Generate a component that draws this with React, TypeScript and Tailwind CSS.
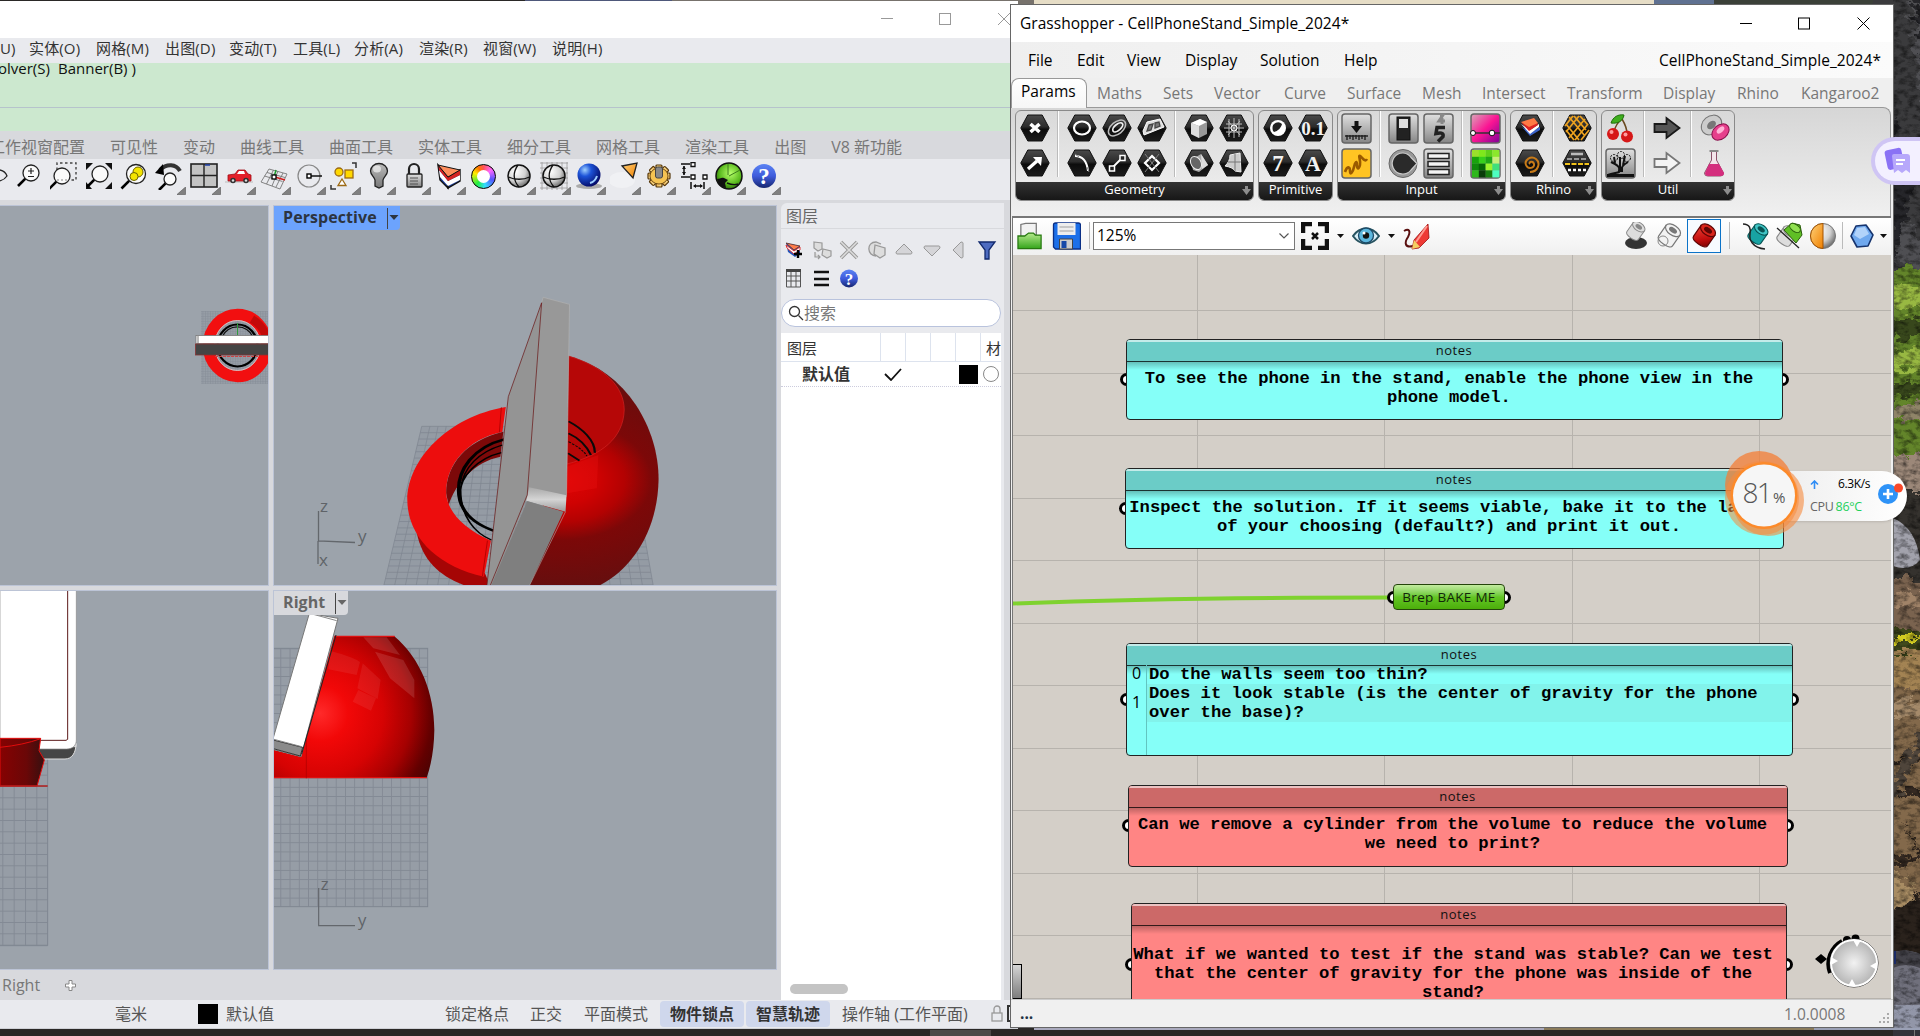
import type { ReactNode } from "react";

const sans = "font-['Open_Sans','Noto_Sans_CJK_SC',sans-serif]";

/* ---------- shared gradients ---------- */
function Defs() {
  return (
    <svg width="0" height="0" className="absolute">
      <defs>
        <linearGradient id="hex" x1="0" y1="0" x2="0" y2="1">
          <stop offset="0" stopColor="#4a4a4a" />
          <stop offset=".45" stopColor="#2b2b2b" />
          <stop offset=".55" stopColor="#0c0c0c" />
          <stop offset="1" stopColor="#1c1c1c" />
        </linearGradient>
        <linearGradient id="metal" x1="0" y1="0" x2="0" y2="1">
          <stop offset="0" stopColor="#e0e0e0" />
          <stop offset=".5" stopColor="#b4b4b4" />
          <stop offset="1" stopColor="#858585" />
        </linearGradient>
        <radialGradient id="greyBall" cx=".35" cy=".3" r=".8">
          <stop offset="0" stopColor="#fff" />
          <stop offset=".55" stopColor="#d2d2d2" />
          <stop offset="1" stopColor="#555" />
        </radialGradient>
        <radialGradient id="blueBall" cx=".32" cy=".28" r=".8">
          <stop offset="0" stopColor="#9fd0ff" />
          <stop offset=".35" stopColor="#1c53d8" />
          <stop offset="1" stopColor="#02045e" />
        </radialGradient>
        <radialGradient id="greenBall" cx=".55" cy=".4" r=".7">
          <stop offset="0" stopColor="#b6ff6a" />
          <stop offset=".6" stopColor="#58b81c" />
          <stop offset="1" stopColor="#1a4a05" />
        </radialGradient>
        <linearGradient id="helpBlue" x1="0" y1="0" x2="0" y2="1">
          <stop offset="0" stopColor="#5b83f3" />
          <stop offset=".5" stopColor="#3f5cdc" />
          <stop offset="1" stopColor="#16266f" />
        </linearGradient>
        <linearGradient id="orange" x1="0" y1="0" x2="1" y2="1">
          <stop offset="0" stopColor="#ffd27a" />
          <stop offset="1" stopColor="#f08000" />
        </linearGradient>
        <linearGradient id="gold" x1="0" y1="0" x2="1" y2="1">
          <stop offset="0" stopColor="#ffe9a0" />
          <stop offset="1" stopColor="#d88a1e" />
        </linearGradient>
        <linearGradient id="redTube" x1="0" y1="0" x2="1" y2="1">
          <stop offset="0" stopColor="#ef4034" />
          <stop offset=".6" stopColor="#c00d0d" />
          <stop offset="1" stopColor="#6e0202" />
        </linearGradient>
        <linearGradient id="greenFolder" x1="0" y1="0" x2="0" y2="1">
          <stop offset="0" stopColor="#b5ea8c" />
          <stop offset="1" stopColor="#35a51c" />
        </linearGradient>
        <linearGradient id="pink" x1="0" y1="0" x2="1" y2="1">
          <stop offset="0" stopColor="#d9a9b9" />
          <stop offset=".5" stopColor="#fb1593" />
          <stop offset="1" stopColor="#7c0099" />
        </linearGradient>
        <linearGradient id="shade" x1="0" y1="0" x2="0" y2="1">
          <stop offset="0" stopColor="#bbb" />
          <stop offset="1" stopColor="#777" />
        </linearGradient>
        <radialGradient id="rightBall" gradientUnits="userSpaceOnUse" cx="960" cy="400" r="420">
          <stop offset="0" stopColor="#ff2a2a" />
          <stop offset=".2" stopColor="#f20808" />
          <stop offset=".45" stopColor="#d60303" />
          <stop offset=".65" stopColor="#a50101" />
          <stop offset=".8" stopColor="#620000" />
          <stop offset="1" stopColor="#2d0606" />
        </radialGradient>
        <radialGradient id="perspBall" gradientUnits="userSpaceOnUse" cx="1130" cy="840" r="360">
          <stop offset="0" stopColor="#e00505" />
          <stop offset=".2" stopColor="#cf0202" />
          <stop offset=".35" stopColor="#b30202" />
          <stop offset=".5" stopColor="#7c0808" />
          <stop offset="1" stopColor="#601010" />
        </radialGradient>
        <linearGradient id="bowl" x1="0" y1="0" x2="1" y2="0">
          <stop offset="0" stopColor="#860202" />
          <stop offset=".6" stopColor="#6a0707" />
          <stop offset="1" stopColor="#351010" />
        </linearGradient>
        <linearGradient id="edgeShine" x1="0" y1="0" x2="0" y2="1">
          <stop offset="0" stopColor="#a8a8a8" />
          <stop offset=".5" stopColor="#d4d4d4" />
          <stop offset="1" stopColor="#9b9b9b" />
        </linearGradient>
        <pattern id="gridRight" x="841" y="205" width="27.7" height="27.7" patternUnits="userSpaceOnUse">
          <path d="M0 0H27.7M0 0V27.7" stroke="#7f8691" strokeWidth="5.5" fill="none" />
        </pattern>
        <pattern id="gridFront" x="7" y="618" width="34" height="34" patternUnits="userSpaceOnUse">
          <path d="M0 0H34M0 0V34" stroke="#7f8691" strokeWidth="6" fill="none" />
        </pattern>
        <pattern id="gridTop" width="2.5" height="2.5" patternUnits="userSpaceOnUse">
          <path d="M0 0H3M0 0V3" stroke="#7f8691" strokeWidth="1" fill="none" />
        </pattern>
      </defs>
    </svg>
  );
}

/* ---------- Rhino toolbar icons, 28 x 28 ---------- */
const I = ({ children, w = 28, h = 28, box = "0 0 28 28" }: { children: ReactNode; w?: number; h?: number; box?: string }) => (
  <svg width={w} height={h} viewBox={box} fill="none" className="shrink-0">
    {children}
  </svg>
);

const Lens = ({ x, y, r, children }: { x: number; y: number; r: number; children?: ReactNode }) => (
  <>
    <path d={`M${x - r * 0.7} ${y + r * 0.7}L${x - r - 5} ${y + r + 5}`} stroke="#000" strokeWidth="2.6" />
    <circle cx={x} cy={y} r={r} fill="#fafafa" stroke="#222" strokeWidth="1.3" />
    {children}
  </>
);

const gearTeeth = [0, 45, 90, 135, 180, 225, 270, 315];

const rhinoIcons: ReactNode[] = [
  <I><Lens x={16} y={11} r={8}><path d="M16 6v6M13 9h6M13 14.5h6" stroke="#222" strokeWidth="1.2" /></Lens></I>,
  <I><path d="M7 8V1h19v17h-6" stroke="#444" strokeWidth="1.4" strokeDasharray="2.5 2.5" /><Lens x={12} y={14} r={8}><path d="M7 18h11" stroke="#888" strokeDasharray="2 2" /></Lens></I>,
  <I><path d="M1 1h7l-7 7zM27 1h-7l7 7zM27 27h-7l7-7zM1 27h6l-6-7z" fill="#111" /><Lens x={15} y={12} r={8} /></I>,
  <I><Lens x={16} y={12} r={9.5}><circle cx="18" cy="10" r="5" fill="#f4e400" stroke="#6d6500" /><circle cx="14" cy="14.5" r="4" fill="#f4e400" stroke="#6d6500" /></Lens></I>,
  <I><path d="M5 8C12 1 21 2 25 9" stroke="#333" strokeWidth="4" /><path d="M8 2L9 13 0 11z" fill="#000" /><Lens x={15} y={17} r={6} /></I>,
  <I><rect x="1" y="2" width="26" height="23" fill="#c3c3c3" stroke="#222" strokeWidth="1.6" /><path d="M14 2v23M1 13.5h26" stroke="#222" strokeWidth="1.4" /><path d="M15 3h5" stroke="#1c3fa8" strokeWidth="1.5" /></I>,
  <I><path d="M0 20h28" stroke="#bbb" /><path d="M3 13l7-1 3-4h7l3 4 3 1v6H3z" fill="#e3202a" stroke="#9e0d14" strokeWidth=".8" /><path d="M12 12l2-3h5l1 3z" fill="#fff" /><circle cx="8" cy="18.5" r="2.8" fill="#333" /><circle cx="8" cy="18.5" r="1.2" fill="#ddd" /><circle cx="21" cy="18.5" r="2.8" fill="#333" /><circle cx="21" cy="18.5" r="1.2" fill="#ddd" /></I>,
  <I><path d="M9 7l18 5-7 15-19-7zM7 10.5l18 5M4.5 14l18 5.5M13.5 8l-7 14M18 9l-6 15M23 11l-7 14" stroke="#777" strokeWidth=".9" /><path d="M14 15l2-7" stroke="#1c9a2b" strokeWidth="1.5" /><path d="M15 15l10 3" stroke="#d01e1e" strokeWidth="1.8" /><rect x="12" y="13" width="4" height="4" fill="#fff" stroke="#000" strokeWidth="1.3" /></I>,
  <I><circle cx="14" cy="14" r="11" stroke="#888" strokeWidth="1.2" /><rect x="12" y="12" width="4" height="4" stroke="#000" strokeWidth="1.4" fill="#fff" /><path d="M16 14h11" stroke="#000" strokeWidth="1.4" /></I>,
  <I><circle cx="9" cy="10" r="4" fill="#ffd800" stroke="#9c6a14" strokeWidth="1.3" /><rect x="15" y="8" width="8" height="8" fill="#ffd800" stroke="#9c6a14" strokeWidth="1.3" /><path d="M12 17l4 6.5H8z" fill="#fff" stroke="#9c6a14" strokeWidth="1.3" /><path d="M22 1h4v5M1 23v4h5" stroke="#333" strokeWidth="1.5" /></I>,
  <I><path d="M10 18C9.5 15 5.5 13 5.5 9a8.5 7.5 0 0117 0c0 4-4 6-4.500 9v6L14 26l-4-2z" fill="url(#shade)" stroke="#222" strokeWidth="1.3" /><ellipse cx="12" cy="7" rx="4" ry="3.5" fill="#fff" opacity=".6" /></I>,
  <I><path d="M9 12V7a5 5 0 0110 0v5" stroke="#222" strokeWidth="2.2" /><rect x="7" y="12" width="15" height="13" rx="1" fill="url(#metal)" stroke="#222" strokeWidth="1.3" /><path d="M10 16h8M10 19h8M10 22h8" stroke="#555" /></I>,
  <I><path d="M3 3l10 12v11L5 18z" fill="#1b3fa0" stroke="#111" strokeWidth="1.4" /><path d="M13 15l12-7v11l-12 7z" fill="#1b3fa0" stroke="#111" strokeWidth="1.4" /><path d="M4 8l9 11 12-6v5l-12 6-8-9z" fill="#fff" /><path d="M3.5 4L13 15.500 25 8v5l-12 6L4 8z" fill="#d62222" /><path d="M3 3l22 5-12 7z" fill="#ff8d5c" stroke="#111" /></I>,
  <div className="grid h-[25px] w-[25px] place-items-center rounded-full border border-black bg-[conic-gradient(#f55_0deg,#f6f_50deg,#55f_110deg,#3df_170deg,#2e4_220deg,#fe0_290deg,#f70_330deg,#f55_360deg)]"><div className="h-[13px] w-[13px] rounded-full bg-white" /></div>,
  <I><circle cx="14" cy="14" r="11" fill="url(#greyBall)" stroke="#111" strokeWidth="1.5" /><path d="M3.5 15c6 3 15 3 21 0M13 3c-5 7-5 15 1 22" stroke="#111" strokeWidth="1.3" /></I>,
  <I><path d="M0 1h28M0 6h28M0 11h28M0 16h28M0 21h28M0 26h28M2 0v28M7 0v28M12 0v28M17 0v28M22 0v28M27 0v28" stroke="#999" strokeWidth=".8" /><circle cx="14" cy="14" r="11" fill="url(#greyBall)" stroke="#111" strokeWidth="1.5" /><path d="M3.5 15c6 3 15 3 21 0M13 3c-5 7-5 15 1 22" stroke="#111" strokeWidth="1.3" /></I>,
  <I><ellipse cx="14" cy="24" rx="13" ry="3" fill="#aaa" /><circle cx="14" cy="13" r="11.5" fill="url(#blueBall)" /><path d="M15 21c4-1 6-4 7-7" stroke="#9fd0ff" strokeWidth="2" /></I>,
  <I><ellipse cx="12" cy="18" rx="13" ry="8" fill="#fff" opacity=".35" /><path d="M12 4l15-3-4 15z" fill="url(#orange)" stroke="#222" strokeWidth="1.3" /></I>,
  <I>
    {gearTeeth.map((a) => <rect key={a} x="11" y="2" width="6" height="8" rx="1" fill="url(#gold)" stroke="#533407" strokeWidth="1.2" transform={`translate(0 1) rotate(${a} 14 13) translate(0 0)`} />)}
    <ellipse cx="14" cy="14" rx="9" ry="8" fill="#f5c352" stroke="#533407" strokeWidth=".8" />
    <rect x="10.5" y="5" width="7" height="11" rx="2" fill="#888" stroke="#444" />
  </I>,
  <I><path d="M1 2h9M1 15h9M4 4v9M11 20v7M24 20v7M14 24h8" stroke="#111" strokeWidth="1.5" /><path d="M2 7l2-3 2 3zM2 10l2 3 2-3zM16 22l-3 2 3 2zM20 22l3 2-3 2z" fill="#111" /><path d="M11 .5h4v4h-4zM11 13h4v4h-4zM23 13h4v4h-4z" fill="#fff" stroke="#111" strokeWidth="1.3" /></I>,
  <I><circle cx="14" cy="14" r="13" fill="url(#greenBall)" stroke="#111" strokeWidth="1.5" /><path d="M2 17c3 0 4-2 7-1l4 2-3 3 1 5c-5 0-8-4-9-9z" fill="#111" /><path d="M12 21c5 2 8 2 11 1" stroke="#111" strokeWidth="1.4" /><path d="M13 2v11M14 14l11-6" stroke="#3d7d1c" /></I>,
  <I><circle cx="14" cy="14" r="12" fill="url(#helpBlue)" /><text x="14" y="22" textAnchor="middle" fontSize="23" fontWeight="700" fill="#fff" className="font-['Liberation_Serif']">?</text></I>,
];

function RhinoToolbar() {
  return (
    <div className="flex h-[41px] shrink-0 items-start overflow-hidden bg-[#e9eaee] pt-[3px]">
      <svg width="11" height="28" viewBox="0 0 11 28" fill="none" className="shrink-0">
        <path d="M0 8c4 1 6 3 7 6-2 3-4 4-7 5" stroke="#222" strokeWidth="1.3" />
      </svg>
      {rhinoIcons.map((icon, i) => (
        <div key={i} className="relative flex h-[33px] w-[35px] shrink-0 justify-center">
          <div className="flex h-[28px] items-center">{icon}</div>
          {i > 3 && (
            <svg width="9" height="8" viewBox="0 0 9 8" className="absolute right-0 bottom-0">
              <path d="M8.5 0v7.5H0z" fill="#808080" stroke="#555" strokeWidth=".6" />
            </svg>
          )}
        </div>
      ))}
    </div>
  );
}

/* ---------- viewport scenes ---------- */
function TopScene() {
  return (
    <svg width="268" height="379" viewBox="0 0 268 379" fill="none" className="block">
      <rect x="201" y="105" width="68" height="73" fill="#969da6" />
      <rect x="201" y="105" width="68" height="73" fill="url(#gridTop)" opacity=".7" />
      <ellipse cx="237.5" cy="139.5" rx="29" ry="31" stroke="#f20f10" strokeWidth="11.5" />
      <path d="M252 113c8 5 13 12 15 20" stroke="#8a0505" strokeWidth="8" opacity=".45" />
      <ellipse cx="237.5" cy="139.5" rx="23" ry="25" stroke="#e8c9c9" strokeWidth=".8" />
      <ellipse cx="237.5" cy="139.5" rx="20" ry="21" stroke="#000" strokeWidth="2.2" />
      <path d="M222 131a17.500 19 0 0131 0" stroke="#111" strokeWidth="1.3" />
      <path d="M237.5 117v12" stroke="#2f9a3d" />
      <path d="M215 150.5h44" stroke="#c44" strokeDasharray="3 1" />
      <rect x="196" y="129.5" width="73" height="8" fill="#fff" stroke="#777" strokeWidth=".8" />
      <path d="M198 130v8" stroke="#777" />
      <rect x="195.5" y="138" width="73" height="11" fill="#444" stroke="#833" strokeWidth=".8" />
    </svg>
  );
}

function PerspectiveScene() {
  const steps = Array.from({ length: 26 }, (_, i) => i / 25);
  return (
    <svg width="502" height="379" viewBox="0 0 502 379" fill="none" className="block">
      <g transform="scale(.4975 .33333) translate(-551 -18)">
        <path d="M848 679H1257L1313 1155H772z" fill="#949ba4" />
        {steps.map((t) => (
          <path key={t} d={`M${848 + 409 * t} 679L${772 + 541 * t} 1155M${848 - 76 * t} ${679 + 476 * t}H${1257 + 56 * t}`} stroke="#7f8691" strokeWidth="1.8" />
        ))}
        <path d="M838 1000C850 1080 880 1125 932 1155H985L975 1120z" fill="#a50505" />
        <path d="M1143 468C1262 515 1325 690 1324 840C1322 990 1272 1105 1207 1155H1064z" fill="url(#perspBall)" />
        <path d="M1143 468C1215 500 1255 560 1255 630C1253 715 1210 765 1140 792z" fill="#b60707" stroke="#d62626" strokeWidth="1.5" />
        <path d="M1140 800L1175 780 1203 765 1200 865 1140 880z" fill="#f01515" opacity=".3" />
        <path d="M1143 664C1170 685 1196 720 1196 758M1143 700C1165 715 1180 740 1188 765M1142 760L1165 782" stroke="#0a0a0a" strokeWidth="4.5" />
        <path d="M1143 725C1160 738 1172 750 1180 768" stroke="#0a0a0a" strokeWidth="2.5" strokeDasharray="6 3" />
        <path d="M1012 695C940 720 897 790 897 880L902 916C915 850 955 785 1006 770z" fill="#7c0909" />
        <path d="M1014 718C950 742 922 810 922 870C922 930 950 970 994 993" stroke="#000" strokeWidth="7" />
        <path d="M1010 735C965 755 930 800 926 870C926 950 955 1000 988 1020M1008 758C960 775 925 830 925 880" stroke="#000" strokeWidth="3.5" />
        <path d="M1017 621C900 650 819 780 819 900C819 1010 880 1100 973 1130L987 1022C930 985 897 930 897 875C898 790 940 718 1010 695z" fill="#ed0d0d" />
        <path d="M1008 622L1004 697M980 1022L970 1128" stroke="#a00" strokeWidth="2" />
        <path d="M1089 308L1022 590L979 1155H990L1064 880z" fill="#949494" />
        <path d="M1092 292L1145 313L1139 890L1062 865L1089 308z" fill="#989898" />
        <path d="M1064 862L1139 886L1137 935L1058 903z" fill="url(#edgeShine)" />
        <path d="M1060 903L1133 935L1065 1155H988z" fill="#7f7f7f" />
        <path d="M1089 308L1022 590L979 1155M1089 308L1060 885L986 1155" stroke="#6b1c1c" strokeWidth="1.8" />
        <path d="M1092 292L1145 313L1139 886M1092 292L1089 308M1137 935L1065 1155" stroke="#b4b4b4" strokeWidth="1.4" />
      </g>
      <path d="M44.5 305v30l36.5 1.5M44 335v23" stroke="#63676c" strokeWidth="1.3" />
      <g fontSize="17" fill="#5f6368" className={sans}>
        <text x="46" y="306">z</text>
        <text x="84" y="336">y</text>
        <text x="45" y="360">x</text>
      </g>
    </svg>
  );
}

function FrontScene() {
  return (
    <svg width="268" height="378" viewBox="0 33 804 1134" fill="none" className="block">
      <rect x="-4" y="536" width="147" height="561" fill="#969da6" />
      <rect x="-4" y="536" width="147" height="561" fill="url(#gridFront)" opacity=".85" />
      <path d="M143 536V1097H0" stroke="#7f8691" strokeWidth="3" />
      <path d="M0 500H228V490C228 520 215 537 195 537H0z" fill="#454545" stroke="#ddd" strokeWidth="3" />
      <path d="M0 20H229V480C229 496 218 507 200 507H0z" fill="#fff" stroke="#888" strokeWidth="2" />
      <path d="M203 33V478L198 481H0" stroke="#5c1a1a" strokeWidth="3" />
      <path d="M0 475H122L117 512 133 540 111 618H0z" fill="url(#bowl)" stroke="#e30c0c" strokeWidth="3" />
      <path d="M0 502Q70 495 122 476" stroke="#e30c0c" strokeWidth="3" />
      <path d="M0 618H143" stroke="#b01c1c" strokeWidth="4" />
    </svg>
  );
}

function RightScene() {
  return (
    <svg width="502" height="378" viewBox="822 33 1506 1134" fill="none" className="block">
      <rect x="822" y="205" width="461" height="775" fill="#969da6" />
      <rect x="822" y="205" width="461" height="775" fill="url(#gridRight)" opacity=".85" />
      <rect x="810" y="205" width="473" height="775" stroke="#7f8691" strokeWidth="3" />
      <path d="M1003 168H1182C1262 235 1303 340 1303 450C1302 505 1295 550 1280 593H822V510L903 530z" fill="url(#rightBall)" />
      <path d="M990 212C1040 225 1075 240 1080 246L1070 285 985 268zM1088 250L1142 300 1133 357 1072 325zM1075 330L1128 355 1113 392 1058 365z" fill="#fff" opacity=".07" />
      <path d="M1090 172L1160 172 1200 225 1120 205zM1125 215L1210 240 1243 300V355L1170 295z" fill="#fff" opacity=".12" />
      <path d="M1003 169H1184M822 593H1281" stroke="#e01010" strokeWidth="4" />
      <path d="M919 450V595" stroke="#a00" strokeWidth="2" />
      <path d="M928 100L1014 115 903 530 818 508V480z" fill="#fff" stroke="#777" strokeWidth="3" />
      <path d="M820 480L908 502 901 528 820 506z" fill="#8b8b8b" stroke="#333" strokeWidth="3" />
      <path d="M940 103L1010 122M822 478L905 500" stroke="#888" strokeWidth="3" />
      <path d="M1008 165L905 522" stroke="#222" strokeWidth="3" />
      <path d="M956 924V1037H1065" stroke="#63676c" strokeWidth="3.5" />
      <g fontSize="50" fill="#5f6368" className={sans}>
        <text x="962" y="930">z</text>
        <text x="1074" y="1038">y</text>
      </g>
    </svg>
  );
}

function ViewLabel({ name, tone, width }: { name: string; tone: string; width: string }) {
  return (
    <div className={`absolute top-0 left-0 flex h-6 items-center rounded-br pl-[9px] text-[16px] leading-6 font-bold ${tone} ${width}`}>
      <span className="flex-1 pb-[2px] tracking-[.08px]">{name}</span>
      <span className="h-[21px] w-px bg-[#444]" />
      <svg width="12" height="6" viewBox="0 0 12 6"><path d="M1.500 0h9L6 5z" fill="currentColor" /></svg>
    </div>
  );
}

/* ---------- layers panel ---------- */
function LayerTools() {
  return (
    <div className="grid shrink-0 grid-cols-[repeat(8,27.5px)] grid-rows-2 pt-[7px] pl-[3px] *:h-[28px]">
      <I w={24} box="0 0 24 28"><path d="M2 7l14 3v7l-5 4-7-5z" fill="#2554b8" /><path d="M2 9l8 6 6-4v3l-6 4-7-6z" fill="#fff" stroke="#d33" /><path d="M2 7l14 3-6 4z" fill="#ff7c4a" stroke="#533" strokeWidth=".8" /><path d="M14 14v8M10 18h8" stroke="#000" strokeWidth="2.4" /></I>
      <I w={24} box="0 0 24 28"><path d="M2 6l8 1v6l-4 2-4-3zM11 13l8 2v5l-4 2-5-3zM3 16v5h5M6 19l2 2-2 2" fill="#ddd" stroke="#999" strokeWidth="1.2" /></I>
      <I w={24} box="0 0 24 28"><path d="M2 6l16 16M18 6L2 22" stroke="#999" strokeWidth="3.5" /><path d="M2 6l16 16M18 6L2 22" stroke="#ddd" strokeWidth="1.5" /></I>
      <I w={24} box="0 0 24 28"><path d="M8 9l10 3v7l-5 3-6-4zM9 20C0 20-1 6 9 6l5 2" fill="#ddd" stroke="#999" strokeWidth="1.3" /></I>
      <I w={24} box="0 0 24 28"><path d="M10 8l8 8q0 2-1 2H3q-1 0-1-2z" fill="#d5d5d8" stroke="#999" /></I>
      <I w={24} box="0 0 24 28"><path d="M10 20l8-8q0-2-1-2H3q-1 0-1 2z" fill="#d5d5d8" stroke="#999" /></I>
      <I w={24} box="0 0 24 28"><path d="M4 14l8-8q2 0 2 1v14q0 1-2 1z" fill="#d5d5d8" stroke="#999" /></I>
      <I w={24} box="0 0 24 28"><path d="M2 6h16l-6 8v9H8v-9z" fill="#4d6bc0" stroke="#122a6e" strokeWidth="1.3" /></I>
      <I w={24} box="0 0 24 28"><path d="M2.5 6h14v17h-14zM2 12h15M2 17h15M7 6v17M12 6v17" stroke="#555" /><path d="M2 5h15v3H2z" fill="#444" /></I>
      <I w={24} box="0 0 24 28"><path d="M2 8h15M2 15h15M2 21h15" stroke="#111" strokeWidth="2.4" /></I>
      <I w={24} box="0 0 24 28"><circle cx="10" cy="14.5" r="9" fill="url(#helpBlue)" /><text x="10" y="20.5" textAnchor="middle" fontSize="17" fontWeight="700" fill="#fff" className="font-['Liberation_Serif']">?</text></I>
    </div>
  );
}

function LayersPanel() {
  return (
    <div className="flex w-[223px] shrink-0 flex-col rounded-tl-md bg-[#e9eaee]">
      <div className="h-[26px] shrink-0 border-b border-[#d8d9dd] pl-[5px] text-[16px] leading-[26px] text-[#666]">图层</div>
      <LayerTools />
      <div className="mt-[7px] flex h-[28px] w-[220px] shrink-0 items-center rounded-full border border-[#b9c3dd] bg-white pl-[6px] text-[16px] text-[#777]">
        <svg width="16" height="16" viewBox="0 0 16 16" fill="none" stroke="#333" strokeWidth="1.3"><circle cx="6.5" cy="6.5" r="5" /><path d="M10.5 10.5l4.5 4.5" /></svg>
        搜索
      </div>
      <div className="mt-[6px] flex w-[220px] flex-1 flex-col overflow-hidden bg-white text-[15px] text-[#333]">
        <div className="flex h-[29px] shrink-0 items-stretch border-b border-[#dde3ee] leading-[30px] *:shrink-0">
          <span className="w-[100px] border-r border-[#dde3ee] pl-[6px]">图层</span>
          <span className="w-[25px] border-r border-[#dde3ee]" />
          <span className="w-[25px] border-r border-[#dde3ee]" />
          <span className="w-[25px] border-r border-[#dde3ee]" />
          <span className="w-[25px] border-r border-[#dde3ee]" />
          <span className="w-[20px] pl-[5px]">材</span>
        </div>
        <div className="flex h-[25px] shrink-0 items-center border-b border-dotted border-[#ccd] *:shrink-0">
          <span className="w-[103px] pl-[21px] text-[16px] font-bold">默认值</span>
          <svg width="18" height="13" viewBox="0 0 18 13" fill="none"><path d="M1 6l6 6L17 1" stroke="#111" strokeWidth="1.8" /></svg>
          <span className="ml-[57px] h-[19px] w-[19px] bg-black" />
          <span className="ml-[5px] h-[16px] w-[16px] rounded-full border-[1.5px] border-[#888]" />
        </div>
        <div className="mt-auto mb-[6px] ml-[9px] h-[10px] w-[58px] shrink-0 rounded-full bg-[#c4c4c4]" />
      </div>
    </div>
  );
}

/* ---------- Rhino window ---------- */
const rhinoMenu = [
  ["实体(O)", "w-[67px]"], ["网格(M)", "w-[69px]"], ["出图(D)", "w-[64px]"], ["变动(T)", "w-[64px]"], ["工具(L)", "w-[61px]"],
  ["分析(A)", "w-[65px]"], ["渲染(R)", "w-[64px]"], ["视窗(W)", "w-[69px]"], ["说明(H)", "w-[60px]"],
];
const rhinoTabs = ["可见性", "变动", "曲线工具", "曲面工具", "实体工具", "细分工具", "网格工具", "渲染工具", "出图", "V8 新功能"];

function RhinoWindow() {
  return (
    <div className="absolute top-px left-0 flex h-[1028px] w-[1018px] flex-col overflow-hidden bg-[#d8d9dd] whitespace-nowrap">
      <div className="flex h-[37px] shrink-0 justify-end bg-white pt-[12px]">
        <svg width="138" height="13" viewBox="0 0 138 13" fill="none" stroke="#999" strokeWidth="1">
          <path d="M1 5.5h12M118 0l12 12M130 0l-12 12" />
          <rect x="59.5" y=".5" width="11" height="11" />
        </svg>
      </div>
      <div className="flex h-[25px] shrink-0 bg-[#e9eaee] text-[15px] leading-[20px] tracking-[.15px] text-[#333]">
        <span className="w-[29px]">U)</span>
        {rhinoMenu.map(([t, w]) => (
          <span key={t} className={w}>{t}</span>
        ))}
      </div>
      <div className="h-[45px] shrink-0 border-b border-[#b6c3cc] bg-[#cce8cf]">
        <div className="-mt-[5px] flex text-[15px] leading-[20px] text-[#111]">
          <span className="w-[58px] -indent-[2px]">olver(S)</span>
          <span>Banner(B) )</span>
        </div>
      </div>
      <div className="h-[23px] shrink-0 bg-[#cce8cf]" />
      <div className="flex h-[28px] shrink-0 text-[16px] leading-[32px] text-[#777]">
        <span className="w-[110px] shrink-0 -indent-[11px]">工作视窗配置</span>
        <div className="flex gap-[25px]">
          {rhinoTabs.map((t) => <span key={t}>{t}</span>)}
        </div>
      </div>
      <RhinoToolbar />
      <div className="flex flex-1 pt-[3px]">
        <div className="flex w-[781px] shrink-0 flex-col">
          <div className="mt-[2px] grid grid-cols-[269px_504px] grid-rows-[381px_380px] gap-x-[4px] gap-y-[4px]">
            <div className="overflow-hidden border border-l-0 border-[#bcc4d6] bg-[#9ca3ab]"><TopScene /></div>
            <div className="relative overflow-hidden border border-[#bcc4d6] bg-[#9ca3ab]">
              <PerspectiveScene />
              <ViewLabel name="Perspective" tone="bg-[#6ca3fd] text-[#2c3440]" width="w-[126px]" />
            </div>
            <div className="overflow-hidden border border-l-0 border-[#bcc4d6] bg-[#9ca3ab]"><FrontScene /></div>
            <div className="relative overflow-hidden border border-[#bcc4d6] bg-[#9ca3ab]">
              <RightScene />
              <ViewLabel name="Right" tone="bg-[#d8d9dd] text-[#666]" width="w-[74px]" />
            </div>
          </div>
          <div className="flex items-center text-[16px] leading-[30px] text-[#777]">
            <span className="w-[65px] pl-[2px]">Right</span>
            <svg width="11" height="11" viewBox="0 0 11 11"><path d="M4 .5h3V4h3.5v3H7v3.5H4V7H.5V4H4z" fill="#fff" stroke="#888" /></svg>
          </div>
        </div>
        <LayersPanel />
        <div className="mt-[72px] w-[6px] bg-[#d8d9dd]" />
      </div>
      <div className="flex h-[28px] shrink-0 items-center bg-[#e9eaee] text-[16px] text-[#555]">
        <span className="ml-[115px] w-[83px]">毫米</span>
        <span className="mr-[8px] h-[20px] w-[20px] bg-black" />
        <span className="w-[219px]">默认值</span>
        <span className="w-[85px]">锁定格点</span>
        <span className="w-[54px]">正交</span>
        <span className="w-[76px]">平面模式</span>
        <span className="mr-[2px] flex h-[26px] w-[84px] items-center justify-center rounded bg-[#cfd7ec] font-bold text-[#333]">物件锁点</span>
        <span className="mr-[12px] flex h-[26px] w-[84px] items-center justify-center rounded bg-[#cfd7ec] font-bold text-[#333]">智慧轨迹</span>
        <span className="w-[149px]">操作轴 (工作平面)</span>
        <svg width="20" height="18" viewBox="0 0 20 18" fill="none" stroke="#999" strokeWidth="1.3"><rect x="1" y="8" width="10" height="8" /><path d="M3 8V4a3 3 0 016 0v4" /><path d="M20 1h-3v15h3" stroke="#333" strokeWidth="2" /></svg>
      </div>
      <div className="h-[2px] shrink-0 bg-[#cfd1d6]" />
    </div>
  );
}

/* ---------- Grasshopper ribbon ---------- */
const Hex = ({ children }: { children: ReactNode }) => (
  <svg width="30" height="28" viewBox="0 0 30 28" fill="none">
    <path d="M.8 14L7.8 1h14.4l7 13-7 13H7.8z" fill="url(#hex)" stroke="#111" strokeWidth="1" strokeLinejoin="round" />
    {children}
  </svg>
);
const Tile = ({ children, fill = "url(#metal)" }: { children: ReactNode; fill?: string }) => (
  <svg width="31" height="31" viewBox="0 0 31 31" fill="none">
    <rect x="1" y="1" width="29" height="29" rx="3" fill={fill} stroke="#666" strokeWidth="1.5" />
    {children}
  </svg>
);
const Glyph = ({ t, size, y = 21 }: { t: string; size: number; y?: number }) => (
  <text x="15" y={y} textAnchor="middle" fontSize={size} fontWeight="700" fill="#f2f2f2" className="font-['Liberation_Serif']">{t}</text>
);

const geometry = [
  [<Hex><path d="M10.5 10l9 8M19.5 10l-9 8" stroke="#fff" strokeWidth="3.6" /></Hex>,
   <Hex><path d="M8 20l9-8" stroke="#fff" strokeWidth="3.2" /><path d="M13 8h9l-1 9z" fill="#fff" /></Hex>],
  [<Hex><ellipse cx="15" cy="14" rx="8" ry="6.5" stroke="#fff" strokeWidth="2.2" /></Hex>,
   <Hex><path d="M8 7c8 0 12 6 13 15" stroke="#fff" strokeWidth="2" /><path d="M12 8l-4-3M20 18l2 5" stroke="#888" /></Hex>],
  [<Hex><ellipse cx="15" cy="14" rx="10" ry="6" stroke="#bbb" strokeWidth="1.5" transform="rotate(-40 15 14)" /><ellipse cx="16" cy="14" rx="6" ry="3" stroke="#eee" strokeWidth="1.8" transform="rotate(-40 15 14)" /></Hex>,
   <Hex><path d="M10 19l10-10" stroke="#fff" strokeWidth="1.8" /><path d="M7.5 17h5v5h-5zM18 6.5h5v5h-5z" stroke="#fff" strokeWidth="1.5" fill="#222" /></Hex>],
  [<Hex><path d="M10 8l13-3 4 8-20 8-1-4z" fill="#ddd" stroke="#fff" /><path d="M12 11l4-1-2 6-4 1zM18 9l4-1 1 4-5 2z" stroke="#444" fill="#777" strokeWidth="1.3" /></Hex>,
   <Hex><path d="M15 7l7 7-7 7-7-7z" stroke="#fff" strokeWidth="2.2" /><path d="M8 5l14 18M22 5L8 23" stroke="#888" strokeWidth=".9" /></Hex>],
  [<Hex><path d="M7 9l9-4 7 3v12l-8 4-8-4z" fill="#999" /><path d="M7 9l9-4 7 3-8 4z" fill="#fff" /><path d="M7 9l8 3v12l-8-4z" fill="#ddd" /></Hex>,
   <Hex><path d="M7 11l10-6 7 11-9 7-6-2z" fill="#aaa" /><ellipse cx="12" cy="14" rx="7" ry="5" fill="#666" stroke="#eee" transform="rotate(60 12 14)" /><path d="M17 5l7 11-6 4z" fill="#ddd" /></Hex>],
  [<Hex><path d="M15 4v20M5 14h20M9 7l12 14M21 7L9 21M10 5v18M20 5v18M7 10h16M7 18h16" stroke="#bbb" strokeWidth="1" /><circle cx="15" cy="14" r="3" stroke="#fff" /></Hex>,
   <Hex><path d="M11 6l10-2 1 19-6-1c-2-3-5-4-10-5 3-3 5-6 5-11z" fill="#ccc" stroke="#eee" /><path d="M16 5v17M9 13h13" stroke="#777" /></Hex>],
];
const primitive = [
  [<Hex><circle cx="15" cy="14" r="8" fill="#fff" /><path d="M9.500 14a5.500 5.500 0 019.500-4c-1 4-4 7-8 8-1-1-1.500-2-1.500-4z" fill="#222" /></Hex>, <Hex><Glyph t="7" size={23} y={22} /></Hex>],
  [<Hex><Glyph t="0.1" size={19} /></Hex>, <Hex><Glyph t="A" size={22} y={22} /></Hex>],
];
const swatches = ["#9be02c", "#7fe81c", "#5fd01a", "#8be82c", "#18a30d", "#37d01c", "#1fa818", "#c8f07a", "#108a0c", "#066606", "#9cf52c", "#3fe07a", "#2fb81c", "#0a3c0a", "#17800f", "#4effc0"];
const input = [
  [<Tile><path d="M15.5 8v6" stroke="#111" strokeWidth="4" /><path d="M10 13h11l-5.5 7z" fill="#111" /><path d="M4 23h23M6 22v5M9 22v4M12 22v5M15 22v4M18 22v5M21 22v4M24 22v5" stroke="#222" strokeWidth="1.4" /></Tile>,
   <Tile fill="#ffc423"><path d="M4 24c2-6 5-6 5-1s3 1 4-4 3-7 3-2 2 4 3 0-2-10 0-9 5 7 7 3" stroke="#9a5a00" strokeWidth="2.6" /></Tile>],
  [<Tile><rect x="9" y="4" width="13" height="23" fill="#222" stroke="#111" /><rect x="11" y="6" width="9" height="9" fill="#ddd" /></Tile>,
   <I w={31} h={31} box="0 0 31 31"><circle cx="15" cy="15.5" r="14" fill="#999" stroke="#666" /><path d="M15 5a10.5 10.5 0 108 17l6-6.5-6-6A10.5 10.5 0 0015 5z" fill="#2a2a2a" stroke="#ccc" strokeWidth="1.2" /></I>],
  [<Tile><path d="M17 2h3l-4 6h6M19 5v6" stroke="#888" strokeWidth="3" /><path d="M22 14.500h-8l-1 6c4-1 8-1 7 3l-5 5" stroke="#222" strokeWidth="3.500" /></Tile>,
   <Tile><path d="M5 5.5h21v5H5zM5 13.5h21v5H5zM5 21.5h21v5H5z" fill="#f4f4f4" stroke="#222" strokeWidth="1.5" /></Tile>],
  [<Tile fill="url(#pink)"><path d="M1 20h29" stroke="#333" strokeWidth="1.3" /><circle cx="3" cy="20" r="2.5" fill="#fff" stroke="#111" /><circle cx="22" cy="20" r="2.8" fill="#fff" stroke="#111" /></Tile>,
   <Tile>{swatches.map((c, i) => <rect key={i} x={2 + (i % 4) * 6.8} y={2 + Math.floor(i / 4) * 6.8} width="7" height="7" fill={c} />)}</Tile>],
];
const rhinoGroup = [
  [<Hex><path d="M7 13l8 9 10-6v-3l-9 5z" fill="#3a62c8" /><path d="M6 10l9 10 9-7v-3l-9 6z" fill="#fff" /><path d="M6 8l8 9 9-6-1-3-8 4z" fill="#d22" /><path d="M6 8l13-4 4 5-9 4z" fill="#ff7a45" /></Hex>,
   <Hex><path d="M15 15c-2-2 3-4 4 0s-6 6-8 1 5-10 10-6 2 13-6 13" stroke="#c77a18" strokeWidth="2" /></Hex>],
  [<Hex><path d="M7 3l16 19M12 2l12 14M4 10l13 16M18 2l8 9M4 16l8 10M23 5L7 24M17 2L4 18M26 10L13 26M11 2L3 12M27 16l-8 10" stroke="#eda21f" strokeWidth="1.7" /></Hex>,
   <Hex><path d="M9 5h12" stroke="#bbb" strokeWidth="2.5" /><path d="M5 10h20" stroke="#fff" strokeDasharray="5 2" /><path d="M3 15h24" stroke="#f1c21b" strokeWidth="2" strokeDasharray="5 1.5" /><path d="M6 21h18" stroke="#fff" strokeWidth="2.5" strokeDasharray="3 2" /></Hex>],
];
const util = [
  [<I w={31} h={30} box="0 0 31 30"><path d="M17 6c-4 3-7 8-8 13M17 6c3 5 5 10 5 15" stroke="#6a4a20" strokeWidth="1.5" /><path d="M6 10c2-6 7-9 13-8-1 6-6 9-13 8z" fill="#3fae1e" stroke="#1f6d0c" /><circle cx="8" cy="21" r="6" fill="#d61818" /><circle cx="22" cy="23.5" r="6" fill="#d61818" /><circle cx="6.5" cy="19" r="2" fill="#ff9d9d" /><circle cx="20.5" cy="21.5" r="2" fill="#ff9d9d" /></I>,
   <Tile><path d="M3 27c4-2 9-2 11-3 1-4 0-6-4-8M16 24c0-5 2-7 7-10M15 24V9M10 16l-4-2M10 15l-1-6M18 17l2-9" stroke="#111" strokeWidth="2" /><circle cx="9" cy="10" r="3.500" stroke="#111" strokeDasharray="2 1" /><circle cx="16" cy="7" r="3.500" stroke="#111" strokeDasharray="2 1" /><circle cx="22" cy="10" r="3.500" stroke="#111" strokeDasharray="2 1" /><path d="M13 24h5v-5h-4zM2 26h27v3H2z" fill="#111" /></Tile>],
  [<I w={31}><path d="M1 10h12V4l13 10-13 10v-6H1z" fill="#555" stroke="#1a1a1a" strokeWidth="1.8" /></I>,
   <I w={31}><path d="M1 10h12V4l13 10-13 10v-6H1z" fill="#f4f4f4" stroke="#777" strokeWidth="1.8" /></I>],
  [<I w={31}><ellipse cx="11" cy="11" rx="11" ry="9" transform="rotate(-40 11 11)" fill="#ccc" stroke="#777" /><ellipse cx="11" cy="11" rx="5" ry="3.500" transform="rotate(-40 11 11)" fill="#777" /><ellipse cx="20" cy="18" rx="9.500" ry="7" transform="rotate(-40 20 18)" fill="#e6408c" stroke="#8a0f4b" /><ellipse cx="20" cy="16" rx="4.500" ry="2.500" transform="rotate(-40 20 16)" fill="#ffb3d6" /></I>,
   <I w={31}><path d="M11 2v9L4 24q0 3 3 3h13q3 0 3-3L16 11V2z" fill="#f3e4ea" stroke="#8a5068" /><path d="M8.5 15h10l5 9q0 3-3 3h-13q-3 0-3-3z" fill="#d42e7e" /><path d="M9 2h9" stroke="#888" strokeWidth="2" /></I>],
];

type Group = { label: string; cols: ReactNode[][]; breaks: number[]; width: string; more: boolean };
const groups: Group[] = [
  { label: "Geometry", cols: geometry, breaks: [1, 4], width: "w-[239px]", more: true },
  { label: "Primitive", cols: primitive, breaks: [], width: "w-[75px]", more: false },
  { label: "Input", cols: input, breaks: [1, 3], width: "w-[169px]", more: true },
  { label: "Rhino", cols: rhinoGroup, breaks: [1], width: "w-[87px]", more: true },
  { label: "Util", cols: util, breaks: [1, 2], width: "w-[134px]", more: true },
];

function RibbonGroup({ g }: { g: Group }) {
  return (
    <div className={`flex h-[91px] shrink-0 flex-col overflow-hidden rounded-md border border-[#8a8a8a] bg-linear-to-b from-[#d9d9d9] to-[#efefef] ${g.width}`}>
      <div className="flex flex-1 pl-px">
        {g.cols.map((col, i) => (
          <div key={i} className="flex">
            {g.breaks.includes(i) && <div className="mr-[5px] ml-[5px] h-[66px] w-[2px] border-r border-white bg-[#bbb]" />}
            <div className="grid w-[35px] grid-rows-[35px_35px] place-items-center">
              {col.map((c, j) => <div key={j} className="*:-mt-px">{c}</div>)}
            </div>
          </div>
        ))}
      </div>
      <div className="relative h-[18px] bg-linear-to-b from-[#333] to-[#171717] text-center text-[13px] leading-[15px] text-white">
        <span>{g.label}</span>
        {g.more && (
          <svg width="9" height="9" viewBox="0 0 9 9" className="absolute top-[4px] right-[2px]" fill="#999">
            <path d="M3 0h3v3h3L4.5 9 0 3h3z" opacity=".9" />
          </svg>
        )}
      </div>
    </div>
  );
}

const ghMenu = [["File", "w-[49px]"], ["Edit", "w-[50px]"], ["View", "w-[58px]"], ["Display", "w-[75px]"], ["Solution", "w-[84px]"], ["Help", "w-[60px]"]];
const ghTabs = [
  ["Maths", "w-[66px]"], ["Sets", "w-[51px]"], ["Vector", "w-[70px]"], ["Curve", "w-[63px]"], ["Surface", "w-[75px]"], ["Mesh", "w-[60px]"],
  ["Intersect", "w-[85px]"], ["Transform", "w-[96px]"], ["Display", "w-[74px]"], ["Rhino", "w-[64px]"], ["Kangaroo2", "w-[88px]"],
];

const Caret = () => <svg width="7" height="4" viewBox="0 0 7 4"><path d="M0 0h7L3.5 4z" fill="#111" /></svg>;
const Sep = () => <div className="h-[27px] w-px bg-[#bbb]" />;

const Tube = ({ fill, stroke, rim = fill }: { fill: string; stroke: string; rim?: string }) => (
  <g transform="rotate(35 14 14)">
    <path d="M5.5 7v13c0 5 17 5 17 0V7z" fill={fill} stroke={stroke} strokeWidth="1.2" />
    <ellipse cx="14" cy="7" rx="8.5" ry="5" fill={rim} stroke={stroke} strokeWidth="1.2" />
    <ellipse cx="14" cy="7" rx="4.5" ry="2.5" fill={stroke} />
  </g>
);

function CanvasToolbar() {
  return (
    <div className="flex h-[39px] shrink-0 items-center border-t-2 border-[#777] bg-linear-to-b from-white to-[#f0f0f0] pb-[2px] pl-[4px]">
      <I w={27}><path d="M4 14V2l5-1h11v12" fill="#f2f2f2" stroke="#777" strokeWidth="1.3" /><path d="M1 14h7l4-3h5l2 2h6v14H1z" fill="url(#greenFolder)" stroke="#26780f" strokeWidth="1.3" /></I>
      <div className="w-[8px]" />
      <I w={29}><path d="M1 3q0-2 2-2h23q2 0 2 2v24H3l-2-2z" fill="#1c6fe8" stroke="#0a2f86" strokeWidth="1.3" /><path d="M5 1h18v12H5z" fill="#eee" /><path d="M7 5h14M7 9h14" stroke="#bbb" strokeWidth="1.5" /><path d="M7 17h13v10H7z" fill="#ccc" stroke="#444" /><path d="M9 19h5v7H9z" fill="#1749a8" /></I>
      <div className="mr-[3px] ml-[8px]"><Sep /></div>
      <div className="flex h-[28px] w-[202px] items-center justify-between border border-[#777] bg-white pr-[5px] pl-[3px] text-[15.5px]">
        <span>125%</span>
        <svg width="10" height="6" viewBox="0 0 10 6" fill="none"><path d="M.5.5L5 5 9.500.5" stroke="#555" strokeWidth="1.2" /></svg>
      </div>
      <div className="w-[6px]" />
      <I><path d="M2 11V2h9M17 2h9v9M26 17v9h-9M11 26H2v-9" stroke="#111" strokeWidth="4.5" /><path d="M11 11l6 6M17 11l-6 6" stroke="#111" strokeWidth="2.5" /></I>
      <div className="w-[8px]" /><Caret /><div className="w-[8px]" />
      <I><path d="M1 14c7-10 19-10 26 0-7 10-19 10-26 0z" fill="#d8eef7" stroke="#27525f" strokeWidth="2" /><circle cx="14" cy="13.5" r="7.5" fill="#5cb7de" stroke="#1d4a66" strokeWidth="1.3" /><circle cx="14" cy="13.5" r="3.2" fill="#111" /><circle cx="12" cy="11" r="1.5" fill="#fff" /></I>
      <div className="w-[8px]" /><Caret /><div className="w-[8px]" />
      <I><path d="M1 9c5-3 7 0 4 6-4 6-3 11 5 9" stroke="#5a1010" strokeWidth="2" /><path d="M25 2l1 14-10 10-7 1 2-9z" fill="#ee3a35" stroke="#9c1010" strokeWidth=".8" /><path d="M24 4L13 20" stroke="#ff9a90" strokeWidth="2" /><path d="M9 27l2-9 6 7z" fill="#f3cf63" /></I>
      <div className="ml-auto flex items-center">
        <I><ellipse cx="14" cy="21" rx="11" ry="6" fill="#333" /><g transform="translate(2 -2) scale(.82)"><Tube fill="#ddd" stroke="#888" /></g></I>
        <div className="w-[5px]" />
        <I><Tube fill="#f2f2f2" stroke="#777" /><circle cx="8" cy="19" r="5" stroke="#888" /></I>
        <div className="mr-[8px] ml-[4px] grid h-[34px] w-[34px] place-items-center border border-[#0b73c8] bg-[#f7fbff]"><I><Tube fill="url(#redTube)" stroke="#5d0505" rim="#d8251c" /></I></div>
        <Sep />
        <div className="w-[12px]" />
        <I><g transform="translate(3 0) scale(.9)"><Tube fill="#18a3a3" stroke="#075353" rim="#3fc4c4" /></g><path d="M1 2c7 0 8 5 7 10s2 14 15 15" stroke="#222" strokeWidth="1.5" /></I>
        <div className="w-[5px]" />
        <I><g transform="translate(-1 2) scale(.9)"><Tube fill="#ddd" stroke="#888" /></g><path d="M9 8L17 1l8 2 2 10-6 8z" fill="#5fbf25" stroke="#2b5f0c" /><ellipse cx="20" cy="6" rx="6" ry="3.500" fill="#8fe04f" stroke="#2b5f0c" transform="rotate(35 20 6)" /><path d="M2 6l22 20" stroke="#222" strokeWidth="1.3" /></I>
        <div className="w-[6px]" />
        <I><circle cx="14" cy="14" r="12.5" fill="url(#greyBall)" stroke="#777" /><path d="M14 1.5a12.5 12.5 0 000 25z" fill="url(#orange)" stroke="#a35200" /></I>
        <div className="w-[5px]" />
        <Sep />
        <div className="w-[5px]" />
        <I><path d="M8 4l10-1 7 10-5 11-11 1L3 14z" fill="#6fa8ee" stroke="#17346e" strokeWidth="1.6" strokeLinejoin="round" /><path d="M9 6l8-1 4 7-9 5-6-4z" fill="#cfe5ff" opacity=".7" /></I>
        <div className="w-[4px]" /><Caret /><div className="w-[4px]" />
      </div>
    </div>
  );
}

/* ---------- canvas nodes (free placement) ---------- */
const Grip = ({ side, at }: { side: string; at: string }) => (
  <span className={`absolute h-[13px] w-[8px] border-[3px] border-black bg-white ${side} ${at}`} />
);
const gripL = "-left-[6px] rounded-l-full border-r-0";
const gripR = "-right-[6px] rounded-r-full border-l-0";

type NoteProps = { place: string; tone: "cyan" | "red"; grip: string; children: ReactNode };
function Note({ place, tone, grip, children }: NoteProps) {
  const body = tone === "cyan" ? "bg-[#85fff8]" : "bg-[#ff8584]";
  const head = tone === "cyan" ? "bg-[#6bccc7]" : "bg-[#cc6968]";
  return (
    <div className={`absolute ${place}`}>
      <Grip side={gripL} at={grip} />
      <Grip side={gripR} at={grip} />
      <div className={`relative h-full overflow-hidden rounded-[4px] border border-[#222] ${body}`}>
        <div className={`h-[22px] border-t-2 border-b-[1.5px] border-t-white/60 border-b-black/75 pr-px text-center text-[13px] leading-[16px] tracking-[.5px] text-[#111] ${head}`}>notes</div>
        <div className="-mb-[9px] h-[8px] bg-linear-to-b from-black/25 to-transparent" />
        {children}
      </div>
    </div>
  );
}

const mono = "font-['Liberation_Mono',monospace] text-[17.2px] font-bold leading-[19px] text-black whitespace-pre";

function Canvas() {
  return (
    <div className="relative flex-1 overflow-hidden bg-[#d4cfc8]">
      <svg width="880" height="745" viewBox="1013 255 880 745" fill="none" className="absolute inset-0">
        {[1197.5, 1384.5, 1572.5, 1759.5].map((x) => <path key={x} d={`M${x} 255V1000`} stroke="#b7b3ad" />)}
        {[310.5, 373.5, 435.5, 498.5, 560.5, 623.5, 685.5, 748.5, 810.5, 873.5, 935.5, 998.5].map((y) => <path key={y} d={`M1013 ${y}H1893`} stroke="#b7b3ad" />)}
        <path d="M1013 603.500C1130 599 1260 597.500 1390 597.500" stroke="#7fd22f" strokeWidth="4" />
      </svg>

      <Note place="left-[113px] top-[84px] w-[657px] h-[81px]" tone="cyan" grip="top-[34px]">
        <div className={`${mono} pt-[8px] pr-[11px] text-center`}>{"To see the phone in the stand, enable the phone view in the\nphone model."}</div>
      </Note>
      <Note place="left-[112px] top-[213px] w-[659px] h-[81px]" tone="cyan" grip="top-[34px]">
        <div className={`${mono} pt-[8px] pr-[11px] text-center`}>{"Inspect the solution. If it seems viable, bake it to the layer\nof your choosing (default?) and print it out."}</div>
      </Note>

      <div className="absolute top-[329px] left-[380px] h-[26px] w-[112px]">
        <Grip side={gripL} at="top-[7px]" />
        <Grip side={gripR} at="top-[7px]" />
        <div className="relative h-full rounded-[4px] border border-[#24450b] bg-linear-to-b from-[#c3ec9f] via-[#63c623] to-[#4cae0a] text-center text-[13.5px] leading-[24px] tracking-[.3px] text-[#12260a]">Brep BAKE ME</div>
      </div>

      <Note place="left-[113px] top-[388px] w-[667px] h-[113px]" tone="cyan" grip="top-[50px]">
        <div className="flex h-[92px]">
          <div className="w-[20px] border-r border-[#62c5c0] pl-[5px] text-[16px] leading-[18px]">
            <div className="-mt-px">0</div>
            <div className="pt-[11px]">1</div>
          </div>
          <div className="flex-1">
            <div className={`${mono} h-[19px] pl-[2px] leading-[17px]`}>Do the walls seem too thin?</div>
            <div className={`${mono} bg-[#82f3eb] pl-[2px]`}>{"Does it look stable (is the center of gravity for the phone\nover the base)?"}</div>
          </div>
        </div>
      </Note>
      <Note place="left-[115px] top-[530px] w-[660px] h-[82px]" tone="red" grip="top-[34px]">
        <div className={`${mono} pt-[8px] pr-[11px] text-center`}>{"Can we remove a cylinder from the volume to reduce the volume\nwe need to print?"}</div>
      </Note>
      <Note place="left-[118px] top-[648px] w-[656px] h-[123px]" tone="red" grip="top-[55px]">
        <div className={`${mono} -ml-1 pt-[20px] pr-[8px] text-center`}>{"What if we wanted to test if the stand was stable? Can we test\nthat the center of gravity for the phone was inside of the\nstand?"}</div>
      </Note>

      <div className="absolute bottom-0 left-0 h-[35px] w-[9px] border border-l-0 border-black bg-linear-to-b from-[#d5d5d5] to-[#7d7d7d]" />
      <svg width="68" height="58" viewBox="0 0 68 58" fill="none" className="absolute right-[11px] bottom-[9px]">
        <defs><radialGradient id="compass"><stop offset="0" stopColor="#f2f2f2" /><stop offset="1" stopColor="#b2b2b2" /></radialGradient></defs>
        <path d="M18 41A26 26 0 0130 9" stroke="#000" strokeWidth="4" />
        <circle cx="35" cy="8" r="4" fill="#000" /><circle cx="43.500" cy="6.500" r="4" fill="#000" />
        <path d="M3 27l6-5 6 5-6 5z" fill="#000" />
        <circle cx="42" cy="31" r="24" fill="url(#compass)" stroke="#333" />
        <circle cx="42" cy="31" r="23" stroke="#fff" strokeWidth="2" />
        <path d="M41 8h8l-4 7zM65 30v8l-7-4zM36 54l4-7 4 7zM19 25v8l7-4z" fill="#fff" />
      </svg>
    </div>
  );
}

function GrasshopperWindow() {
  return (
    <div className="absolute top-[4px] left-[1010px] flex h-[1024px] w-[884px] flex-col border border-[#666] bg-[#f0f0f0] whitespace-nowrap">
      <div className="flex h-[37px] shrink-0 items-center bg-white pl-[9px] text-[15.5px] tracking-[.04px]">
        <span className="pt-px">Grasshopper - CellPhoneStand_Simple_2024*</span>
        <svg width="130" height="13" viewBox="0 0 130 13" fill="none" stroke="#000" strokeWidth="1" className="mr-[23px] ml-auto">
          <path d="M0 6.500h12M117.500.5l12 12M129.500.5l-12 12" />
          <rect x="58.5" y="1" width="11" height="11" />
        </svg>
      </div>
      <div className="flex h-[36px] shrink-0 items-center bg-linear-to-r from-[#efefef] to-[#fbfbfb] pt-px pl-[17px] text-[15.5px]">
        {ghMenu.map(([t, w]) => <span key={t} className={w}>{t}</span>)}
        <span className="mr-[12px] ml-auto tracking-[.05px]">CellPhoneStand_Simple_2024*</span>
      </div>
      <div className="flex h-[29px] shrink-0 bg-[#efefef] text-[15.5px] text-[#777]">
        <span className="z-10 -mb-px h-[30px] w-[76px] rounded-t-lg border border-b-0 border-[#999] bg-linear-to-b from-white to-[#f6f6f6] pl-[9px] leading-[24px] text-black">Params</span>
        <span className="w-[10px]" />
        {ghTabs.map(([t, w]) => <span key={t} className={`${w} leading-[31px]`}>{t}</span>)}
      </div>
      <div className="mr-[2px] h-[109px] shrink-0 rounded-tr-lg border-t border-r border-[#999] bg-linear-to-b from-[#d6d6d6] to-[#f0f0f0]">
        <div className="flex gap-[4px] pt-[2px] pl-[4px]">
          {groups.map((g) => <RibbonGroup key={g.label} g={g} />)}
        </div>
      </div>
      <div className="mr-[2px] ml-px flex flex-1 flex-col border-l border-[#777]">
        <CanvasToolbar />
        <Canvas />
      </div>
      <div className="flex h-[28px] shrink-0 items-center border-t border-[#ccc] pl-[9px] text-[15.5px]">
        <span className="pt-px font-bold text-[#234]">...</span>
        <span className="mr-[13px] ml-auto w-[82px] pt-[2px] text-[#777]">1.0.0008</span>
        <svg width="12" height="12" viewBox="0 0 12 12" fill="#aaa" className="mt-[10px] mr-[2px]">
          <path d="M8 0h2v2H8zM4 4h2v2H4zM8 4h2v2H8zM0 8h2v2H0zM4 8h2v2H4zM8 8h2v2H8z" />
        </svg>
      </div>
    </div>
  );
}

/* ---------- desktop ---------- */
function Wallpaper() {
  return (
    <svg width="1920" height="1036" viewBox="0 0 1920 1036" className="absolute inset-0" fill="none">
      <defs>
        <filter id="rough" filterUnits="userSpaceOnUse" x="1870" y="0" width="50" height="1036">
          <feTurbulence type="fractalNoise" baseFrequency=".09 .13" numOctaves="4" seed="7" result="n" />
          <feDisplacementMap in="SourceGraphic" in2="n" scale="22" xChannelSelector="R" yChannelSelector="G" />
        </filter>
        <filter id="grain" filterUnits="userSpaceOnUse" x="1893" y="0" width="27" height="1036">
          <feTurbulence type="fractalNoise" baseFrequency=".12 .2" numOctaves="4" seed="3" />
          <feColorMatrix values="0 0 0 0 0  0 0 0 0 0  0 0 0 0 0  2.400 0 0 0 -1" />
        </filter>
      </defs>
      <rect width="1920" height="1036" fill="#2a2826" />
      <rect x="525" width="147" height="2" fill="#4e587a" />
      <rect x="672" width="362" height="4" fill="#77726c" />
      <rect x="1034" width="620" height="4" fill="#e6ddc6" />
      <rect x="1654" width="60" height="5" fill="#5f7191" />
      <path d="M1714 0h206v6h-206z" fill="#3b4038" />
      <g filter="url(#rough)">
        <rect x="1870" y="-20" width="80" height="320" fill="#3a3a3d" />
        <path d="M1890-10h18l20 170v-170zM1890 190l30 50v40l-30-30z" fill="#505052" />
        <path d="M1908-10h30v130zM1890 100l22 90-22 90z" fill="#26262a" />
        <path d="M1870 268h80v190h-80z" fill="#64852b" />
        <path d="M1880 290q22-12 60 0v22q-30-8-60 4zM1880 350q30 4 60-6v18q-30 12-60 6z" fill="#98b843" />
        <path d="M1880 322q20-8 60 4v14q-30-6-60 0zM1880 385l60-4v10l-60 8z" fill="#37471b" />
        <path d="M1870 405h80v14h-80z" fill="#8f8468" />
        <path d="M1870 456h80v34h-80z" fill="#9c8879" />
        <path d="M1870 488h80v94h-80z" fill="#35332e" />
      </g>
      <path d="M1893 518q23 10 27 42-10 12-27 6z" fill="#a2a2ac" />
      <g filter="url(#rough)">
        <path d="M1870 578h80v52h-80z" fill="#7a6450" />
        <path d="M1870 596q40-10 80 6v6h-80z" fill="#a08368" />
        <path d="M1870 628h80v24h-80z" fill="#414a1d" />
        <path d="M1895 637h25v4h-25z" fill="#d4cc22" />
        <path d="M1870 652h80v36h-80z" fill="#a38353" />
        <path d="M1870 688h80v232h-80z" fill="#83694b" />
        <path d="M1870 716h60v-16h-60z" fill="#a58a6b" />
        <path d="M1870 795h70v-6h-70zM1870 760h60v3h-60zM1870 866l50-12v8l-50 10zM1900 820l30 40v6z" fill="#352a20" />
        <path d="M1885 795l50-90v22l-50 88z" fill="#4f443b" />
        <path d="M1880 874q40 2 38 26-10 20-38 20z" fill="#a88c64" />
        <path d="M1870 922l60-30v62h-60z" fill="#2b241f" />
      </g>
      <path d="M1893 952q14-4 27 2v76h-27z" fill="#70707c" />
      <path d="M1893 952q14-4 27 2v14q-14-6-27 0z" fill="#44434a" />
      <path d="M1893 1005h27v25h-27z" fill="#9296a8" />
      <rect x="1893" width="27" height="1036" fill="#000" filter="url(#grain)" opacity=".5" />
      <rect x="1893" y="951" width="3" height="13" fill="#1b2b66" />
      <path d="M1034 1028h510v2h-510z" fill="#a9a9bd" />
      <path d="M1544 1028h270v2h-270z" fill="#8b7b5a" />
      <path d="M1814 1028h106v2h-106z" fill="#9aa0b5" />
      <rect x="1893" y="1030" width="27" height="6" fill="#33333a" />
      <rect x="930" y="1030" width="61" height="6" fill="#4d4a48" />
      <rect x="1914" y="1030" width="1" height="6" fill="#777" />
    </svg>
  );
}

function MonitorWidget() {
  return (
    <div className="absolute top-[448px] left-[1722px] h-[92px] w-[188px]">
      <div className="absolute top-[23px] right-[3px] flex h-[50px] w-[120px] rounded-r-full bg-linear-to-r from-[#efefef] to-white pl-[23px] shadow">
        <div className="w-[60px] text-[12px] leading-[22px]">
          <div className="flex items-center justify-between pt-[2px]">
            <svg width="9" height="9" viewBox="0 0 9 9" fill="none"><path d="M4.5 9V1M1 4.5L4.5 1 8 4.5" stroke="#2f8df5" strokeWidth="1.6" /></svg>
            <span className="tracking-[-.4px]">6.3K/s</span>
          </div>
          <div className="flex gap-[2px] pt-px text-[12.5px] tracking-[-.3px]"><span className="text-[#666]">CPU</span><span className="text-[#1fd05c]">86°C</span></div>
        </div>
        <svg width="26" height="26" viewBox="0 0 26 26" className="mt-[9px] ml-[7px]">
          <circle cx="11" cy="14" r="10" fill="#2f93f7" /><path d="M11 9v10M6 14h10" stroke="#fff" strokeWidth="2.6" /><circle cx="21.5" cy="8" r="4.5" fill="#f8492b" />
        </svg>
      </div>
      <svg width="84" height="92" viewBox="0 0 84 92" className="absolute inset-0">
        <circle cx="37" cy="37" r="34" fill="#f47d35" opacity=".75" />
        <circle cx="46" cy="52" r="36" fill="#f78b3d" opacity=".6" />
        <circle cx="40" cy="50" r="37" fill="#f78b3d" opacity=".55" />
        <circle cx="42" cy="47.5" r="33.5" fill="#fc8a2a" />
        <circle cx="42" cy="47.5" r="31" fill="#f6f6f6" />
        <text x="20.5" y="55" fontSize="28" letterSpacing="-1.8" fill="#555" className="font-['Open_Sans'] font-light">81</text>
        <text x="51" y="55" fontSize="15" fill="#555" className="font-['Open_Sans']">%</text>
      </svg>
    </div>
  );
}

export default function App() {
  return (
    <div className={`relative h-[1036px] w-[1920px] overflow-hidden text-black ${sans}`}>
      <Defs />
      <Wallpaper />
      <RhinoWindow />
      <GrasshopperWindow />
      <MonitorWidget />
      <div className="absolute top-[137px] left-[1871px] h-[48px] w-[49px] rounded-l-full border-4 border-r-0 border-[#cfc5f4] bg-[#f3f0ff]">
        <svg width="30" height="30" viewBox="0 0 30 30" className="mt-[5px] ml-[9px]" fill="none">
          <rect x="2" y="3" width="17" height="20" rx="3" fill="#8a72f5" transform="rotate(-12 10 13)" />
          <path d="M8 10q0-2 2-2h13q3 0 3 3v16l-4-3-4 3-4-3-4 3z" fill="#b7a8fb" />
          <path d="M12 14h9M12 18h7" stroke="#fff" strokeWidth="1.8" />
        </svg>
      </div>
    </div>
  );
}
